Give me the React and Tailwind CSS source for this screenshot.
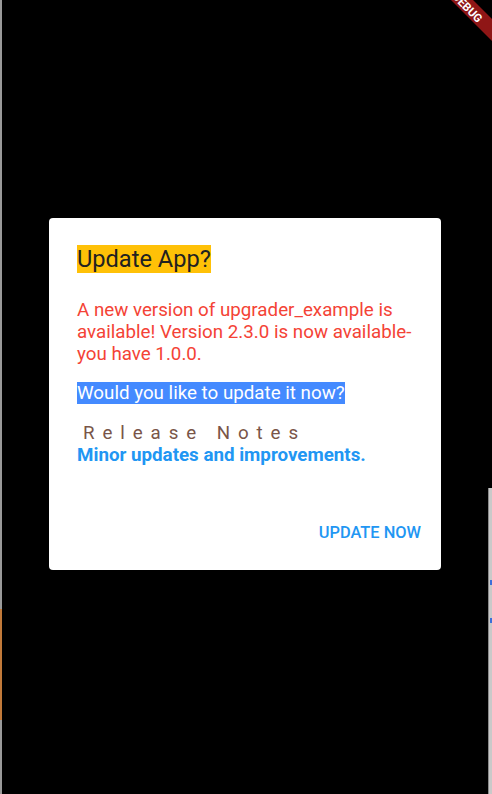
import React from "react";

export default function App() {
  return (
    <div
      className="relative w-[492px] h-[794px] bg-black overflow-hidden"
      style={{ fontFamily: "Roboto, 'Liberation Sans', sans-serif" }}
    >
      {/* left edge strip */}
      <div className="absolute left-0 top-0 w-[2px] h-full bg-[#9a9a9a]">
        <div className="absolute left-0 top-[609px] w-[2px] h-[111px] bg-[#c27a3a]" />
      </div>
      {/* right edge strip */}
      <div className="absolute right-0 top-[488px] w-[4px] h-[306px] bg-[#c9c9c9] border-l border-[#8a8a8a]">
        <div className="absolute left-[1px] top-[92px] w-[2px] h-[5px] bg-[#3b6fd8]" />
        <div className="absolute left-[1px] top-[130px] w-[2px] h-[5px] bg-[#3b6fd8]" />
        <div className="absolute left-[1px] top-[310px] w-[2px] h-[5px] bg-[#3b6fd8]" />
      </div>

      {/* debug banner */}
      <svg className="absolute right-0 top-0" width="60" height="60" viewBox="432 0 60 60">
        <polygon points="451,0 473,0 492,19 492,41" fill="#8f1616" />
        <text
          x="0"
          y="0"
          fill="#ffffff"
          fontSize="11.5"
          fontWeight="bold"
          textAnchor="middle"
          fontFamily="Roboto, 'Liberation Sans', sans-serif"
          transform="translate(467.5,7.5) rotate(45)"
          dy="4"
        >
          DEBUG
        </text>
      </svg>

      <div className="pt-[218px] pl-[49px] pr-[51px]">
        <div className="bg-white rounded-[4px] pt-[28px] px-[28px] pb-[26px]">
          <div className="leading-[27px] text-[23.6px] text-[#212121]">
            <span className="bg-[#FFC107]">Update App?</span>
          </div>
          <div className="mt-[26px] text-[18.75px] leading-[22px] text-[#F44336]">
            A new version of upgrader_example is available! Version 2.3.0 is now available-you have 1.0.0.
          </div>
          <div className="mt-[17px] text-[18.75px] leading-[22px] text-white">
            <span className="bg-[#448AFF]">Would you like to update it now?</span>
          </div>
          <div className="mt-[18px] pl-[6px] text-[18.75px] leading-[22px] tracking-[7.9px] text-[#795548]">
            Release Notes
          </div>
          <div className="text-[18.75px] leading-[22px] font-bold text-[#2196F3]">
            Minor updates and improvements.
          </div>
          <div className="mt-[56px] flex justify-end">
            <span className="text-[16.4px] leading-[22px] font-medium text-[#2196F3] mr-[-8px]">
              UPDATE NOW
            </span>
          </div>
        </div>
      </div>
    </div>
  );
}
